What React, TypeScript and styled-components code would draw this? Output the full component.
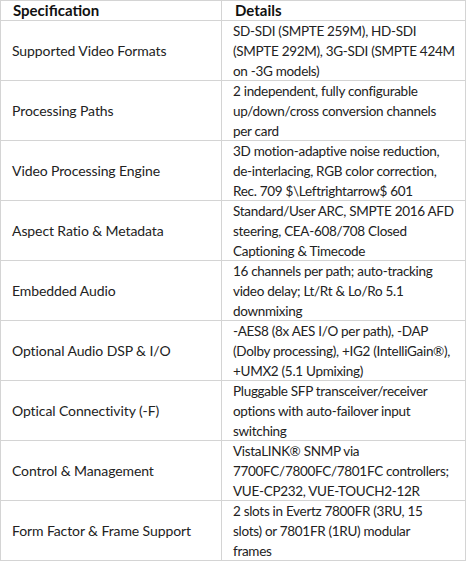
import styled, { createGlobalStyle } from "styled-components";

const GlobalStyle = createGlobalStyle`
  html, body {
    margin: 0;
    padding: 0;
    background: #ffffff;
  }
  body {
    font-family: Lato, "Open Sans", sans-serif;
    color: #1a1a1a;
  }
`;

const specs = [
  {
    name: "Supported Video Formats",
    details: [
      "SD-SDI (SMPTE 259M), HD-SDI",
      "(SMPTE 292M), 3G-SDI (SMPTE 424M",
      "on -3G models)",
    ],
  },
  {
    name: "Processing Paths",
    details: [
      "2 independent, fully configurable",
      "up/down/cross conversion channels",
      "per card",
    ],
  },
  {
    name: "Video Processing Engine",
    details: [
      "3D motion-adaptive noise reduction,",
      "de-interlacing, RGB color correction,",
      "Rec. 709 $\\Leftrightarrow$ 601",
    ],
  },
  {
    name: "Aspect Ratio & Metadata",
    details: [
      "Standard/User ARC, SMPTE 2016 AFD",
      "steering, CEA-608/708 Closed",
      "Captioning & Timecode",
    ],
  },
  {
    name: "Embedded Audio",
    details: [
      "16 channels per path; auto-tracking",
      "video delay; Lt/Rt & Lo/Ro 5.1",
      "downmixing",
    ],
  },
  {
    name: "Optional Audio DSP & I/O",
    details: [
      "-AES8 (8x AES I/O per path), -DAP",
      "(Dolby processing), +IG2 (IntelliGain®),",
      "+UMX2 (5.1 Upmixing)",
    ],
  },
  {
    name: "Optical Connectivity (-F)",
    details: [
      "Pluggable SFP transceiver/receiver",
      "options with auto-failover input",
      "switching",
    ],
  },
  {
    name: "Control & Management",
    details: [
      "VistaLINK® SNMP via",
      "7700FC/7800FC/7801FC controllers;",
      "VUE-CP232, VUE-TOUCH2-12R",
    ],
  },
  {
    name: "Form Factor & Frame Support",
    details: [
      "2 slots in Evertz 7800FR (3RU, 15",
      "slots) or 7801FR (1RU) modular",
      "frames",
    ],
  },
];

const Table = styled.div`
  width: 466px;
  display: grid;
  grid-template-columns: 221px 1fr;
  border-top: 1px solid #d4d4d4;
  border-left: 1px solid #d4d4d4;
  box-sizing: border-box;
  font-size: 14px;
`;

const Cell = styled.div<{ $detail?: boolean }>`
  box-sizing: border-box;
  border-right: 1px solid #d4d4d4;
  border-bottom: 1px solid #d4d4d4;
  height: 60px;
  padding: ${(p) => (p.$detail ? "1px 0 0 11px" : "0 0 0 11px")};
  display: flex;
  flex-direction: column;
  justify-content: center;
  line-height: 20px;
  white-space: nowrap;
  font-size: ${(p) => (p.$detail ? "13.5px" : "14px")};
  letter-spacing: ${(p) => (p.$detail ? "-0.3px" : "-0.1px")};
  color: #222222;
`;

const HeaderCell = styled.div<{ $detail?: boolean }>`
  box-sizing: border-box;
  border-right: 1px solid #d4d4d4;
  border-bottom: 1px solid #d4d4d4;
  height: 20px;
  padding: 0 0 0 ${(p) => (p.$detail ? "13px" : "12px")};
  display: flex;
  align-items: center;
  line-height: 19px;
  font-size: 15px;
  font-weight: 700;
  color: #111111;
`;

const Line = styled.span`
  display: block;
`;

export default function App() {
  return (
    <>
      <GlobalStyle />
      <Table>
        <HeaderCell>Specification</HeaderCell>
        <HeaderCell $detail>Details</HeaderCell>
        {specs.map((row) => (
          <>
            <Cell key={row.name + "-n"}>{row.name}</Cell>
            <Cell key={row.name + "-d"} $detail>
              {row.details.map((line) => (
                <Line key={line}>{line}</Line>
              ))}
            </Cell>
          </>
        ))}
      </Table>
    </>
  );
}
